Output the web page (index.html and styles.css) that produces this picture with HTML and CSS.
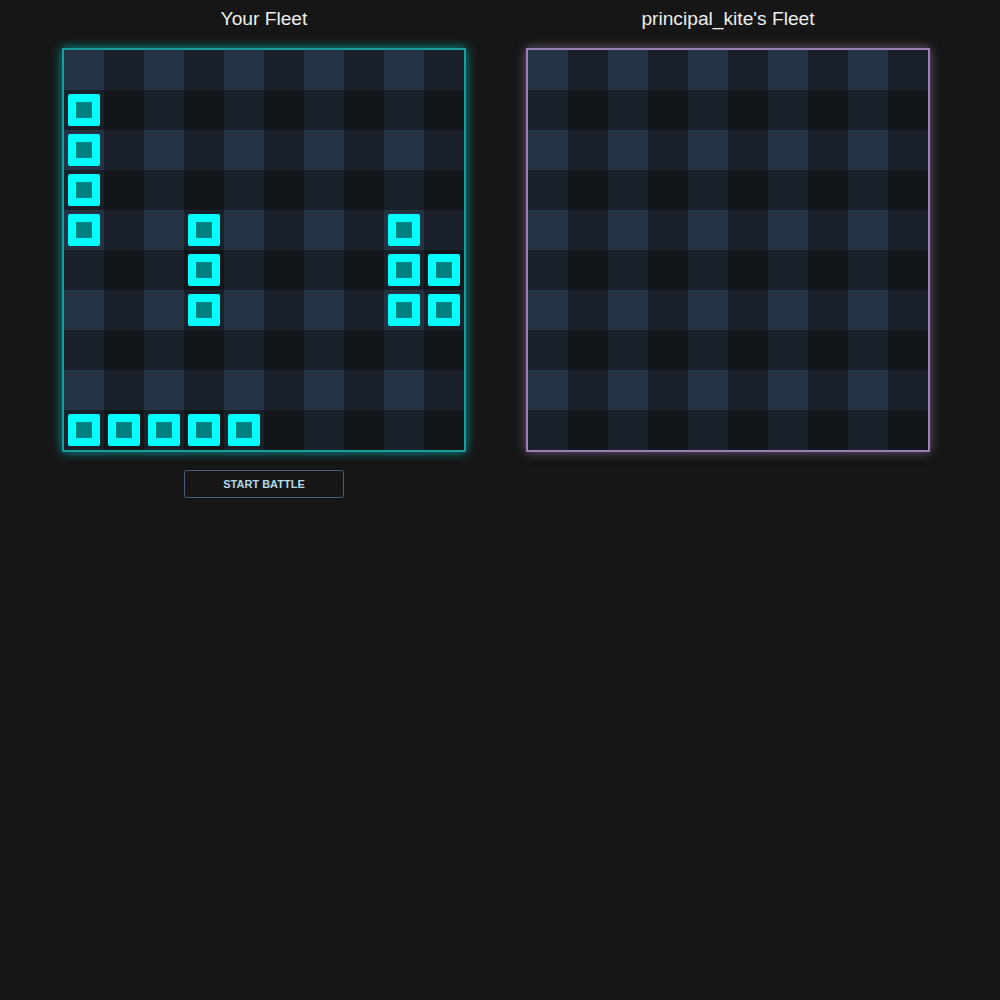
FILE: index.html
```html
<!DOCTYPE html>
<html lang="en">
<head>
    <meta charset="UTF-8">
    <title>Battleship</title>
    <link rel="stylesheet" href="styles.css">
</head>
<body>
    <main class="fleets">
        <section class="fleet">
            <h2>Your Fleet</h2>
            <div class="board own" id="own-board"></div>
            <button class="start-btn">START BATTLE</button>
        </section>
        <section class="fleet">
            <h2>principal_kite's Fleet</h2>
            <div class="board enemy" id="enemy-board"></div>
        </section>
    </main>

    <script>
        // ship cells as [row, col]
        const ships = [
            [1, 0], [2, 0], [3, 0], [4, 0],
            [4, 3], [5, 3], [6, 3],
            [4, 8], [5, 8], [6, 8],
            [5, 9], [6, 9],
            [9, 0], [9, 1], [9, 2], [9, 3], [9, 4]
        ];

        function shade(r, c) {
            const odd = (r % 2) + (c % 2);
            return odd === 0 ? 'light' : odd === 1 ? 'mid' : 'dark';
        }

        function renderBoard(id, withShips) {
            const board = document.getElementById(id);
            for (let r = 0; r < 10; r++) {
                for (let c = 0; c < 10; c++) {
                    const cell = document.createElement('div');
                    cell.className = 'cell ' + shade(r, c);
                    if (withShips && ships.some(s => s[0] === r && s[1] === c)) {
                        const ship = document.createElement('span');
                        ship.className = 'ship';
                        cell.appendChild(ship);
                    }
                    board.appendChild(cell);
                }
            }
        }

        renderBoard('own-board', true);
        renderBoard('enemy-board', false);
    </script>
</body>
</html>
```

FILE: styles.css
```css
body {
    margin: 0;
    background: #161616;
    color: #eee;
    font-family: "Liberation Sans", Arial, sans-serif;
}

.fleets {
    display: flex;
    gap: 60px;
    padding-left: 62px;
}

.fleet {
    display: flex;
    flex-direction: column;
    align-items: center;
    width: 404px;
}

.fleet h2 {
    margin: 8px 0 18px;
    font-size: 19.2px;
    font-weight: normal;
    line-height: 22px;
}

.board {
    display: grid;
    grid-template-columns: repeat(10, 40px);
    grid-template-rows: repeat(10, 40px);
    border: 2px solid #1b9c9c;
    box-shadow: 0 0 10px rgba(0, 210, 210, 0.7);
}

.board.enemy {
    border-color: #9a80b4;
    box-shadow: 0 0 10px rgba(170, 135, 200, 0.6);
}

.cell {
    display: flex;
    align-items: center;
    justify-content: center;
}

.cell.light { background: #243445; }
.cell.mid { background: #1a212a; }
.cell.dark { background: #121519; }

.ship {
    width: 16px;
    height: 16px;
    border: 8px solid #00ffff;
    border-radius: 2px;
    background: #008080;
}

.start-btn {
    margin-top: 18px;
    width: 160px;
    height: 28px;
    background: transparent;
    border: 1px solid #4b6079;
    border-radius: 3px;
    color: #b4dbe8;
    font-family: "Liberation Sans", Arial, sans-serif;
    font-size: 11px;
    font-weight: bold;
    cursor: pointer;
}
```
